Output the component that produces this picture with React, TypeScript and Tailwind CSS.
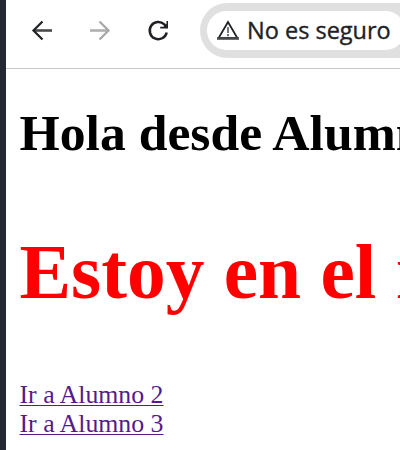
export default function App() {
  return (
    <div className="flex h-[450px] w-[400px] overflow-hidden bg-white">
      <div className="w-[6px] shrink-0 bg-[#252733]" />
      <div className="flex w-[394px] shrink-0 flex-col overflow-hidden">
        <header className="flex h-[69px] shrink-0 items-start border-b border-[#c9c9c9] text-[#202124]">
          <nav className="flex h-[60px] w-[194px] shrink-0 items-center">
            <svg className="ml-[24px] h-6 w-6" viewBox="0 0 24 24" fill="none" stroke="currentColor"><path d="M22 12.500H4" strokeWidth="2.600" stroke="#48494b" /><path d="m12.500 3.500-9 9 9 9" strokeWidth="2.200" /></svg>
            <svg className="ml-[34px] h-6 w-6 text-[#a6a6a6]" viewBox="0 0 24 24" fill="none" stroke="currentColor"><path d="M2 12.500h18" strokeWidth="2.600" stroke="#b0b0b0" /><path d="m11.500 3.500 9 9-9 9" strokeWidth="2.200" /></svg>
            <svg className="ml-[34px] h-6 w-6" viewBox="0 0 24 24" fill="none" stroke="currentColor" strokeWidth="2.500"><path d="M20.700 14.500a8.600 8.600 0 1 1-2.400-8.100L20 8.200" /><path d="M22 3v7.500h-7.800v-1.800h3.200L20.500 6V3z" fill="currentColor" stroke="none" /></svg>
          </nav>
          <div className="mt-[3px] flex h-[55px] w-[260px] shrink-0 items-center rounded-full bg-[#e0e0e0] pl-[7px]">
            <div className="flex h-[39px] w-[198px] items-center rounded-full bg-white pl-[9px]">
              <svg className="mb-px h-[22px] w-[24px] shrink-0" viewBox="0 0 24 22" fill="none" stroke="currentColor"><path d="M12 3 2.600 19h18.800z" strokeWidth="1.800" /><path d="M1 19.500h22" strokeWidth="2.600" stroke="#48494b" /><path d="M12 8v6M12 15v2.200" strokeWidth="2" stroke="#77787a" /></svg>
              <span className="ml-[7px] whitespace-nowrap font-['Open_Sans',sans-serif] text-[23.500px] font-medium [-webkit-text-stroke:0.350px_#202124]">No es seguro</span>
            </div>
          </div>
        </header>
        <main className="whitespace-nowrap pl-[13.500px] font-['Liberation_Serif',serif]">
          <h2 className="mt-[34px] text-[51.700px] font-bold leading-[60px] text-black">Hola desde Alumno 1</h2>
          <h1 className="mt-[65px] text-[77.400px] font-bold leading-[88px] text-[#ff0000]">Estoy en el nodo</h1>
          <div className="mt-[64px] flex flex-col items-start text-[25.800px] leading-[29px] text-[#551a8b]">
            <a className="underline decoration-1 underline-offset-2" href="#alumno2">Ir a Alumno 2</a>
            <a className="underline decoration-1 underline-offset-2" href="#alumno3">Ir a Alumno 3</a>
          </div>
        </main>
      </div>
    </div>
  );
}
